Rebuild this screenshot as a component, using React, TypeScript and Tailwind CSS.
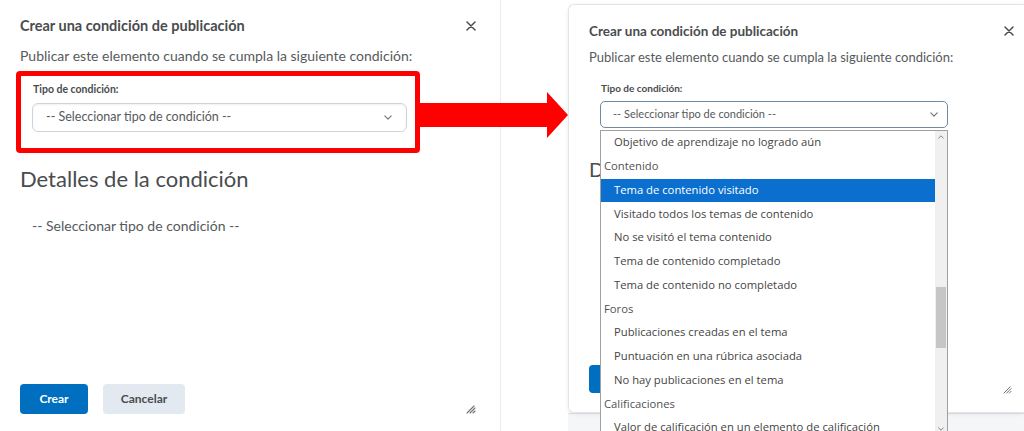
import React from 'react';

const Chevron: React.FC<{ className?: string }> = ({ className }) => (
  <svg viewBox="0 0 10 6" className={className} fill="none" stroke="currentColor" strokeWidth="1.4" strokeLinecap="round" strokeLinejoin="round">
    <path d="M1 1l4 4 4-4" />
  </svg>
);

const CloseIcon: React.FC = () => (
  <svg viewBox="0 0 10 10" className="h-[10px] w-[10px] text-[#494c4e]" fill="none" stroke="currentColor" strokeWidth="1.5" strokeLinecap="round">
    <path d="M1 1l8 8M9 1l-8 8" />
  </svg>
);

const ResizeGrip: React.FC<{ className?: string }> = ({ className }) => (
  <svg viewBox="0 0 10 10" className={className} fill="none" stroke="#6e7376" strokeWidth="1.1" strokeLinecap="round">
    <path d="M1 9L8 2M4 9l5-5M7 9l2-2" />
  </svg>
);

const options: { label: string; group?: boolean; selected?: boolean }[] = [
  { label: 'Objetivo de aprendizaje no logrado aún' },
  { label: 'Contenido', group: true },
  { label: 'Tema de contenido visitado', selected: true },
  { label: 'Visitado todos los temas de contenido' },
  { label: 'No se visitó el tema contenido' },
  { label: 'Tema de contenido completado' },
  { label: 'Tema de contenido no completado' },
  { label: 'Foros', group: true },
  { label: 'Publicaciones creadas en el tema' },
  { label: 'Puntuación en una rúbrica asociada' },
  { label: 'No hay publicaciones en el tema' },
  { label: 'Calificaciones', group: true },
  { label: 'Valor de calificación en un elemento de calificación' },
];

const App: React.FC = () => {
  return (
    <div className="relative flex h-[431px] w-[1024px] overflow-hidden bg-white font-['Lato',sans-serif] text-[#494c4e]">
      {/* left: closed dialog */}
      <div className="relative flex h-full w-[501px] shrink-0 flex-col border-r border-[#ececec] pl-5">
        <div className="flex items-center justify-between pt-[15px] pr-[24px]">
          <h2 className="text-[14.5px] leading-[22px] font-bold">Crear una condición de publicación</h2>
          <CloseIcon />
        </div>
        <p className="mt-[8px] text-[14px] leading-[22px] text-[#565a5c]">
          Publicar este elemento cuando se cumpla la siguiente condición:
        </p>
        <div className="-ml-1 mt-[4px] h-[82px] w-[404px] rounded-[4px] border-[5px] border-[#ff0000] pt-[6px] pl-[12px] pr-[8px]">
          <label className="block text-[10.5px] leading-[14px] font-bold">Tipo de condición:</label>
          <div className="ml-[-1px] mt-[7px] flex h-[29px] items-center justify-between rounded-[6px] border border-[#cdd5dc] bg-white pl-[13px] pr-[14px] shadow-[inset_0_1px_2px_rgba(0,0,0,0.06)]">
            <span className="text-[12.5px] text-[#565a5c]">-- Seleccionar tipo de condición --</span>
            <Chevron className="h-[5px] w-[8px] text-[#6e7376]" />
          </div>
        </div>
        <h3 className="mt-[12px] text-[22px] leading-[28px] text-[#494c4e]">Detalles de la condición</h3>
        <p className="mt-[24px] pl-3 text-[14px] leading-[18px] text-[#565a5c]">-- Seleccionar tipo de condición --</p>
        <div className="mt-auto mb-[17px] flex gap-[15px]">
          <button className="h-[30px] w-[68px] rounded-[4px] bg-[#006fbf] text-[12px] font-bold text-white">Crear</button>
          <button className="h-[30px] w-[82px] rounded-[4px] bg-[#e3e9f1] text-[12px] font-bold text-[#494c4e]">Cancelar</button>
        </div>
        <ResizeGrip className="absolute bottom-[17px] right-[24px] h-[10px] w-[10px]" />
      </div>

      {/* right: open dropdown */}
      <div className="relative ml-[67px] flex flex-1 flex-col">
        <div className="relative mt-1 flex h-[409px] flex-col rounded-l-[6px] border border-r-0 border-[#e3e6e9] bg-white pl-5 shadow-[0_1px_4px_rgba(0,0,0,0.08)]">
          <div className="flex items-center justify-between pt-[15px] pr-[10px]">
            <h2 className="text-[13.5px] leading-[22px] font-bold">Crear una condición de publicación</h2>
            <CloseIcon />
          </div>
          <p className="mt-[5px] text-[13px] leading-[20px] text-[#565a5c]">
            Publicar este elemento cuando se cumpla la siguiente condición:
          </p>
          <label className="mt-[14px] ml-[12px] block text-[10px] leading-[14px] font-bold">Tipo de condición:</label>
          <div className="mt-[6px] ml-[11px] flex h-[27px] w-[348px] items-center justify-between rounded-[5px] border border-[#6f8aa3] bg-white pl-[12px] pr-[9px]">
            <span className="text-[11px] text-[#565a5c]">-- Seleccionar tipo de condición --</span>
            <Chevron className="h-[5px] w-[8px] text-[#6e7376]" />
          </div>
          <h3 className="mt-[28px] text-[20px] leading-[26px]">Detalles de la condición</h3>
          <div className="mt-auto mb-[19px] flex gap-[14px]">
            <button className="h-[28px] w-[64px] rounded-[4px] bg-[#006fbf] text-[11px] font-bold text-white">Crear</button>
          </div>
          <ResizeGrip className="absolute bottom-[18px] right-[12px] h-[9px] w-[9px]" />

          {/* native-style option list */}
          <div className="absolute left-[31px] top-[125px] flex h-[310px] w-[348px] border border-[#a0a0a0] bg-white font-['Open_Sans',sans-serif] text-[11.25px] text-[#444]">
            <ul className="flex-1">
              {options.map((o) => (
                <li
                  key={o.label}
                  className={`flex h-[23.75px] items-center whitespace-nowrap ${o.group ? 'pl-[3px] text-[#4f5254]' : 'pl-[13px]'} ${o.selected ? 'bg-[#0a6fcf] text-white' : ''}`}
                >
                  {o.label}
                </li>
              ))}
            </ul>
            <div className="relative w-[12px] bg-[#f0f0f0]">
              <Chevron className="absolute left-[3px] top-[4px] h-[4px] w-[6px] rotate-180 text-[#707070]" />
              <div className="absolute left-[1px] top-[156px] h-[61px] w-[10px] bg-[#c6c6c6]" />
              <Chevron className="absolute left-[3px] top-[296px] h-[4px] w-[6px] text-[#707070]" />
            </div>
          </div>
        </div>
        <div className="flex-1 border-t border-[#dfe2e6] bg-[#f5f6f8]" />
      </div>

      {/* annotation arrow */}
      <svg className="absolute left-[419px] top-[92px] h-[46px] w-[150px]" viewBox="0 0 150 46">
        <path d="M0 11h128V0l21 23-21 23V35H0z" fill="#ff0000" />
      </svg>
    </div>
  );
};

export default App;
